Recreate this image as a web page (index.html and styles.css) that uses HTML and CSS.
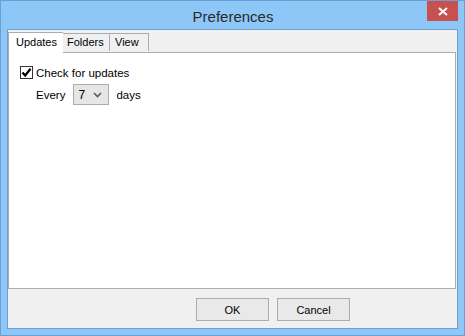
FILE: index.html
```html
<!DOCTYPE html>
<html lang="en">
<head>
    <meta charset="UTF-8">
    <title>Preferences</title>
    <link rel="stylesheet" href="styles.css">
</head>
<body>
    <div class="window">
        <div class="titlebar">
            <span class="title">Preferences</span>
            <button class="close" type="button" aria-label="Close">
                <svg width="10" height="9" viewBox="0 0 10 9">
                    <path d="M1 1 L9 8 M9 1 L1 8" stroke="#fff" stroke-width="2" fill="none"/>
                </svg>
            </button>
        </div>

        <div class="client">
            <div class="tabs">
                <div class="tab active">Updates</div>
                <div class="tab tab-folders">Folders</div>
                <div class="tab tab-view">View</div>
            </div>

            <div class="panel">
                <label class="check-row">
                    <span class="checkbox">
                        <svg width="11" height="11" viewBox="0 0 11 11">
                            <path d="M1.5 5.5 L4.2 8.5 L9.5 1.8" stroke="#000" stroke-width="2.2" fill="none"/>
                        </svg>
                    </span>
                    Check for updates
                </label>
                <div class="every-row">
                    <span>Every</span>
                    <div class="combo">
                        <span>7</span>
                        <svg width="9" height="6" viewBox="0 0 9 6">
                            <path d="M1 1 L4.5 4.5 L8 1" stroke="#5a5a5a" stroke-width="1.6" fill="none"/>
                        </svg>
                    </div>
                    <span>days</span>
                </div>
            </div>

            <div class="buttons">
                <button type="button" class="btn">OK</button>
                <button type="button" class="btn">Cancel</button>
            </div>
        </div>
    </div>
</body>
</html>
```

FILE: styles.css
```css
body {
    margin: 0;
    background-color: #fff;
    font-family: "Liberation Sans", Arial, sans-serif;
    font-size: 11px;
    color: #000;
}

.window {
    width: 465px;
    height: 336px;
    box-sizing: border-box;
    border: 1px solid #6b9fd4;
    background-color: #8dc7f8;
    padding: 0 6px 6px 6px;
}

.titlebar {
    height: 28px;
    display: flex;
    justify-content: center;
    align-items: center;
    position: relative;
}

.title {
    font-size: 15px;
    color: #2a2a2a;
    margin-top: 2px;
    margin-left: 1px;
}

.close {
    position: absolute;
    top: 0;
    right: 0;
    width: 31px;
    height: 20px;
    border: none;
    padding: 0;
    background-color: #c75050;
    display: flex;
    align-items: center;
    justify-content: center;
}

.client {
    height: 298px;
    border: 1px solid #6f9fd0;
    background-color: #f0f0f0;
    display: flex;
    flex-direction: column;
}

.tabs {
    display: flex;
    align-items: flex-end;
    height: 21px;
    margin-top: 1px;
    position: relative;
    z-index: 1;
}

.tab {
    box-sizing: border-box;
    height: 18px;
    border: 1px solid #acacac;
    border-bottom: none;
    background-color: #f0f0f0;
    padding: 2px 4px 0 4px;
    margin-bottom: 1px;
}

.tab + .tab {
    border-left: none;
}

.tab.active {
    height: 21px;
    width: 55px;
    background-color: #fff;
    padding: 3px 0 0 7px;
    margin-bottom: -1px;
    border-right: none;
}

.tab-folders {
    width: 47px;
    border-left: 1px solid #acacac;
}

.tab-view {
    width: 39px;
    padding-left: 5px;
}

.panel {
    height: 237px;
    box-sizing: border-box;
    margin-right: 1px;
    border: 1px solid #acacac;
    background-color: #fff;
    padding: 13px 0 0 11px;
    font-size: 11.5px;
}

.check-row {
    display: flex;
    align-items: center;
    gap: 3px;
    height: 13px;
}

.checkbox {
    width: 11px;
    height: 11px;
    border: 1px solid #333;
    background-color: #fff;
    display: flex;
    align-items: center;
    justify-content: center;
}

.every-row {
    display: flex;
    align-items: center;
    margin: 5px 0 0 16px;
    height: 21px;
}

.combo {
    box-sizing: border-box;
    width: 36px;
    height: 21px;
    margin: 0 7px 0 8px;
    border: 1px solid #acacac;
    background-color: #e6e6e6;
    display: flex;
    align-items: center;
    justify-content: space-between;
    padding: 0 6px 0 4px;
    font-size: 12px;
}

.buttons {
    display: flex;
    gap: 8px;
    padding: 9px 0 0 188px;
}

.btn {
    box-sizing: border-box;
    width: 73px;
    height: 23px;
    border: 1px solid #acacac;
    background-color: #e9e9e9;
    font-family: "Liberation Sans", Arial, sans-serif;
    font-size: 11px;
    color: #000;
    padding: 0;
}
```
